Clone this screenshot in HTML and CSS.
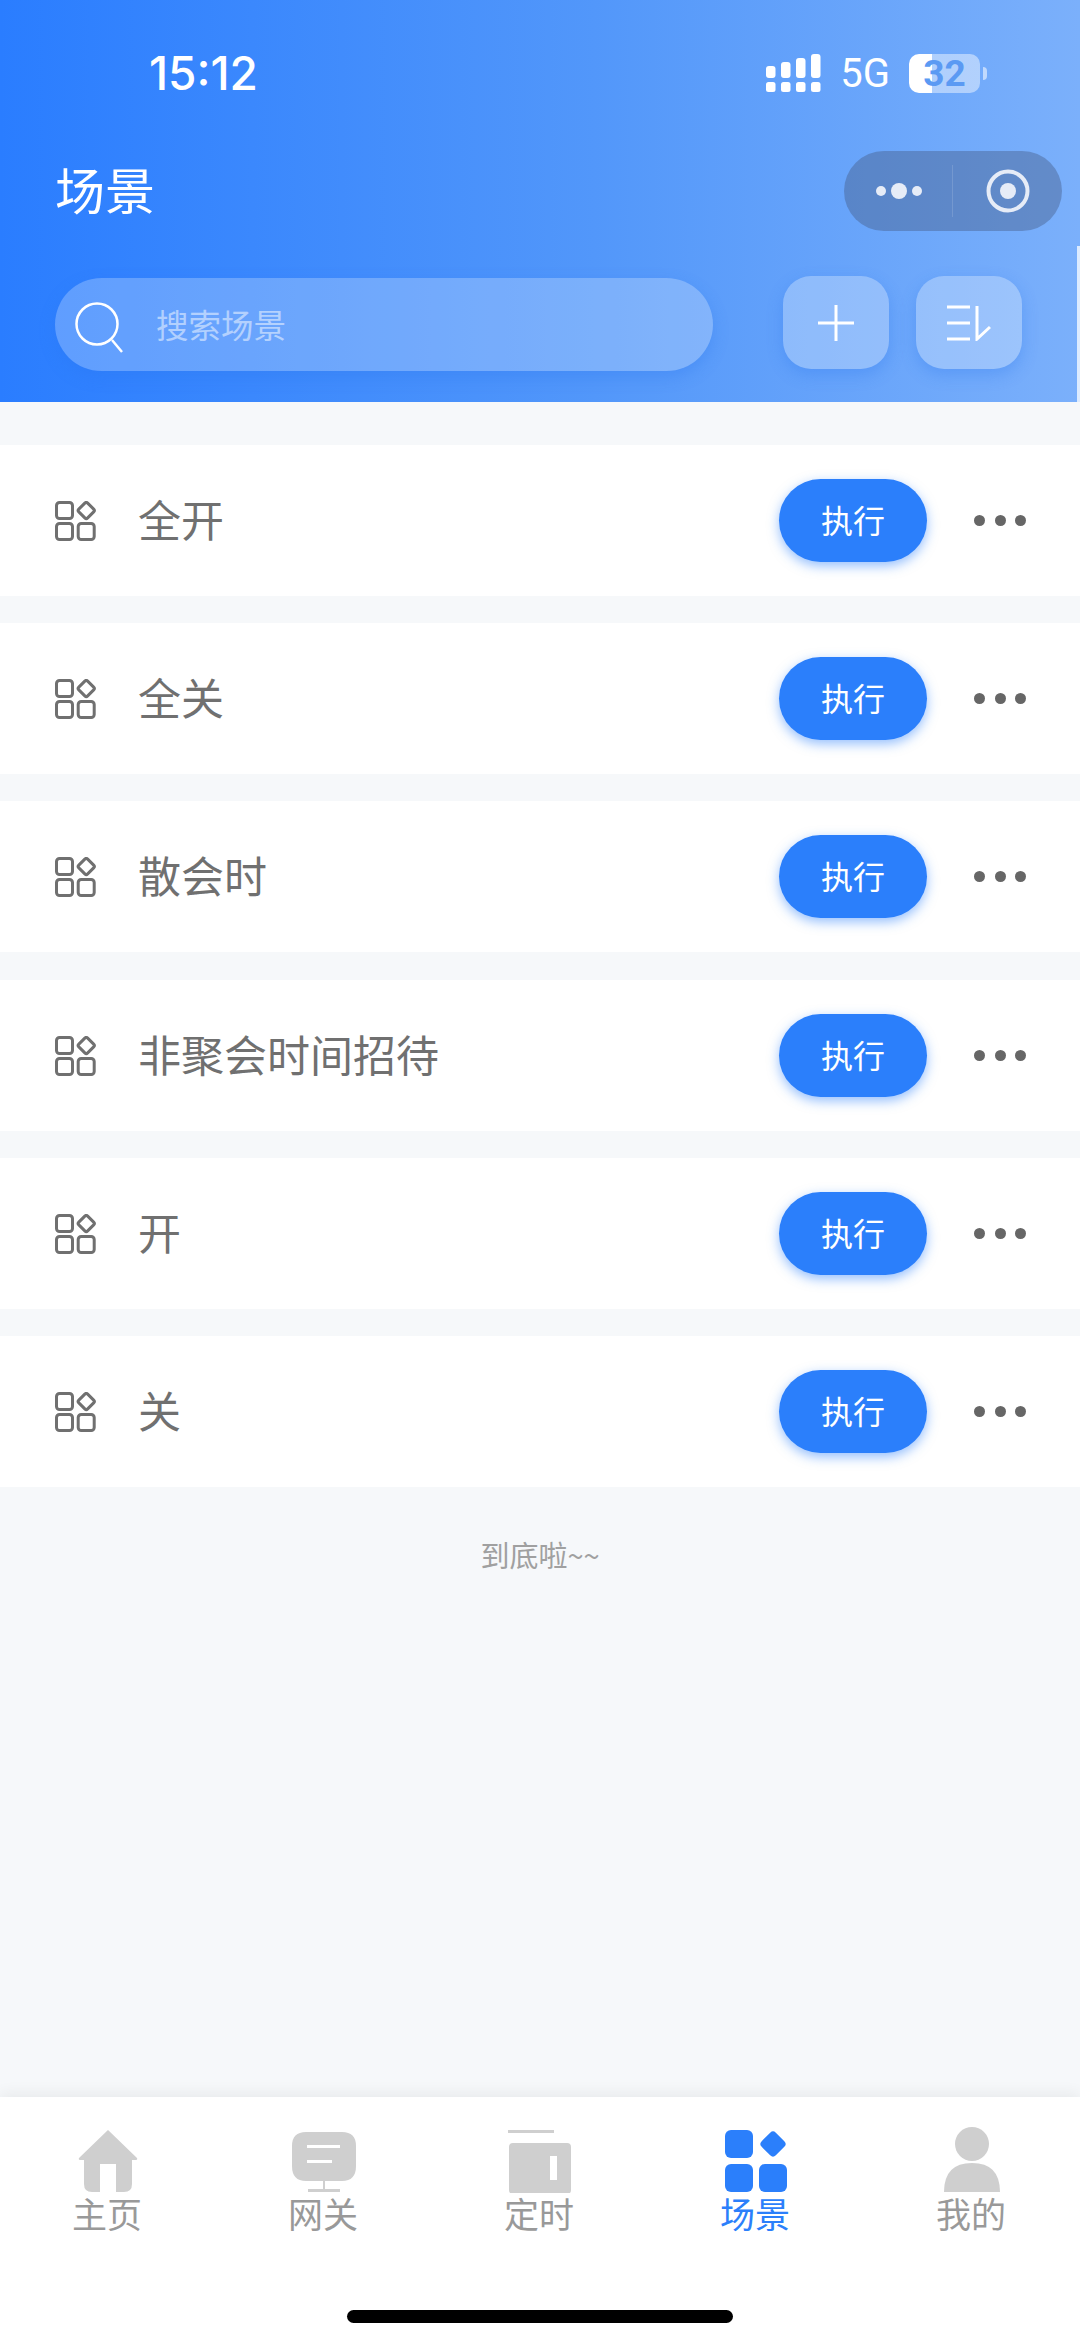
FILE: index.html
```html
<!DOCTYPE html>
<html lang="zh-CN">
<head>
    <meta charset="UTF-8">
    <title>场景</title>
    <link rel="stylesheet" href="styles.css">
</head>
<body>
    <svg class="defs" width="0" height="0">
        <symbol id="scene-icon" viewBox="0 0 42 42">
            <rect x="1.5" y="1.5" width="16" height="16" rx="3"/>
            <rect x="25" y="3.25" width="12.5" height="12.5" rx="2" transform="rotate(45 31.25 9.5)"/>
            <rect x="1.5" y="22.5" width="16" height="16" rx="3"/>
            <rect x="23.2" y="22.5" width="16" height="16" rx="3"/>
        </symbol>
    </svg>

    <div class="page">
        <header class="header">
            <div class="status">
                <span class="time">15:12</span>
                <div class="status-right">
                    <svg class="signal" width="55" height="38" viewBox="0 0 55 38">
                        <rect x="0" y="28" width="9.5" height="10" rx="2.5"/>
                        <rect x="15" y="28" width="9.5" height="10" rx="2.5"/>
                        <rect x="30" y="28" width="9.5" height="10" rx="2.5"/>
                        <rect x="45" y="28" width="9.5" height="10" rx="2.5"/>
                        <rect x="0" y="12" width="9.5" height="12" rx="3"/>
                        <rect x="15" y="8" width="9.5" height="16" rx="3"/>
                        <rect x="30" y="4" width="9.5" height="20" rx="3"/>
                        <rect x="45" y="0" width="9.5" height="24" rx="3"/>
                    </svg>
                    <span class="net">5G</span>
                    <span class="battery">32</span>
                </div>
            </div>

            <div class="nav">
                <h1>场景</h1>
                <div class="capsule">
                    <svg width="50" height="24" viewBox="0 0 50 24">
                        <circle cx="6" cy="12" r="5"/>
                        <circle cx="24" cy="12" r="8"/>
                        <circle cx="42" cy="12" r="5"/>
                    </svg>
                    <i class="capsule-line"></i>
                    <svg width="44" height="44" viewBox="0 0 44 44">
                        <circle class="ring" cx="22" cy="22" r="19.5"/>
                        <circle cx="22" cy="22" r="8"/>
                    </svg>
                </div>
            </div>

            <div class="tools">
                <div class="search">
                    <svg width="48" height="56" viewBox="0 0 48 56">
                        <circle cx="22" cy="22" r="20.5"/>
                        <path d="M37 38 L47 50"/>
                    </svg>
                    <span>搜索场景</span>
                </div>
                <div class="tool-btn">
                    <svg width="36" height="36" viewBox="0 0 36 36"><path d="M0 18 H36 M18 0 V36"/></svg>
                </div>
                <div class="tool-btn">
                    <svg width="44" height="36" viewBox="0 0 44 36"><path d="M0 2 H23 M0 18 H23 M0 34 H23 M30 1 V34 L43 22"/></svg>
                </div>
            </div>
        </header>

        <main class="list">
            <div class="row">
                <svg class="row-icon"><use href="#scene-icon"/></svg>
                <span class="row-name">全开</span>
                <span class="run">执行</span>
                <span class="more"><i></i><i></i><i></i></span>
            </div>
            <div class="row">
                <svg class="row-icon"><use href="#scene-icon"/></svg>
                <span class="row-name">全关</span>
                <span class="run">执行</span>
                <span class="more"><i></i><i></i><i></i></span>
            </div>
            <div class="row">
                <svg class="row-icon"><use href="#scene-icon"/></svg>
                <span class="row-name">散会时</span>
                <span class="run">执行</span>
                <span class="more"><i></i><i></i><i></i></span>
            </div>
            <div class="row">
                <svg class="row-icon"><use href="#scene-icon"/></svg>
                <span class="row-name">非聚会时间招待</span>
                <span class="run">执行</span>
                <span class="more"><i></i><i></i><i></i></span>
            </div>
            <div class="row">
                <svg class="row-icon"><use href="#scene-icon"/></svg>
                <span class="row-name">开</span>
                <span class="run">执行</span>
                <span class="more"><i></i><i></i><i></i></span>
            </div>
            <div class="row">
                <svg class="row-icon"><use href="#scene-icon"/></svg>
                <span class="row-name">关</span>
                <span class="run">执行</span>
                <span class="more"><i></i><i></i><i></i></span>
            </div>
            <p class="end">到底啦~~</p>
        </main>

        <footer class="tabbar">
            <nav class="tabs">
                <a class="tab">
                    <svg width="66" height="66" viewBox="0 0 66 66">
                        <path d="M33 3 L62 31 Q63 33 60 33 H57 V57 Q57 65 49 65 H41 V37 H25 V65 H17 Q9 65 9 57 V33 H6 Q3 33 4 31 Z"/>
                    </svg>
                    <span>主页</span>
                </a>
                <a class="tab">
                    <svg width="66" height="66" viewBox="0 0 66 66">
                        <path fill-rule="evenodd" d="M15 5 H51 Q65 5 65 19 V39 Q65 54 51 54 H15 Q1 54 1 39 V19 Q1 5 15 5 Z M16 18 V21 H49 V18 Z M16 33 V36 H41 V33 Z"/>
                        <path d="M32 54 H34 V62 H49 V65 H17 V62 H32 Z"/>
                    </svg>
                    <span>网关</span>
                </a>
                <a class="tab">
                    <svg width="66" height="66" viewBox="0 0 66 66">
                        <path fill-rule="evenodd" d="M6 16 H60 Q64 16 64 20 V63 Q64 67 60 67 H6 Q2 67 2 63 V20 Q2 16 6 16 Z M43 29 V53 H50 V29 Z"/>
                        <rect x="1" y="3" width="46" height="3"/>
                    </svg>
                    <span>定时</span>
                </a>
                <a class="tab active">
                    <svg width="66" height="66" viewBox="0 0 66 66">
                        <rect x="2" y="3" width="28" height="28" rx="6"/>
                        <rect x="40" y="7" width="20" height="20" rx="4" transform="rotate(45 50 17)"/>
                        <rect x="2" y="37" width="28" height="28" rx="6"/>
                        <rect x="36" y="37" width="28" height="28" rx="6"/>
                    </svg>
                    <span>场景</span>
                </a>
                <a class="tab">
                    <svg width="66" height="66" viewBox="0 0 66 66">
                        <circle cx="33" cy="17" r="17"/>
                        <path d="M5 65 Q5 36 33 36 Q61 36 61 65 Z"/>
                    </svg>
                    <span>我的</span>
                </a>
            </nav>
            <div class="home-bar"></div>
        </footer>
    </div>
</body>
</html>
```

FILE: styles.css
```css
* {
    box-sizing: border-box;
}
body {
    margin: 0;
    background: #f6f8fa;
    font-family: "Noto Sans CJK SC", "Noto Sans", sans-serif;
}
.defs {
    display: block;
    height: 0;
}
.page {
    display: flex;
    flex-direction: column;
    min-height: 100vh;
}

/* header */
.header {
    position: relative;
    height: 402px;
    background: linear-gradient(90deg, #2a7dff 0%, #5297fa 55%, #7bb0fb 100%);
    color: #fff;
}
/* pale sliver on the right edge of the header */
.header::after {
    content: "";
    position: absolute;
    right: 0;
    top: 246px;
    bottom: 0;
    width: 3px;
    background: #dcebff;
}
.status {
    display: flex;
    align-items: center;
    justify-content: space-between;
    height: 146px;
    padding: 0 100px 0 149px;
}
.time {
    font-family: Inter, Roboto, sans-serif;
    font-size: 46px;
    font-weight: 500;
}
.status-right {
    display: flex;
    align-items: center;
}
.signal {
    fill: #fff;
}
.net {
    margin-left: 19px;
    font-family: Roboto, sans-serif;
    font-size: 40px;
}
.battery {
    position: relative;
    width: 71px;
    height: 39px;
    margin-left: 19px;
    border-radius: 10px;
    background: linear-gradient(90deg, #fff 32%, rgba(255, 255, 255, 0.45) 32%);
    color: #5b9af3;
    font-family: Roboto, sans-serif;
    font-size: 37px;
    font-weight: 700;
    line-height: 39px;
    text-align: center;
}
.battery::after {
    content: "";
    position: absolute;
    left: 74px;
    top: 13px;
    width: 4px;
    height: 13px;
    border-radius: 0 4px 4px 0;
    background: rgba(255, 255, 255, 0.55);
}
.nav {
    display: flex;
    align-items: center;
    justify-content: space-between;
    height: 80px;
    margin-top: 5px;
    padding: 0 18px 0 55px;
}
.nav h1 {
    margin: -6px 0 0;
    font-size: 50px;
    font-weight: 400;
}
.capsule {
    display: flex;
    align-items: center;
    width: 218px;
    height: 80px;
    padding-left: 31px;
    border-radius: 40px;
    background: rgba(70, 90, 130, 0.42);
}
.capsule svg {
    fill: #e6ecf7;
}
.capsule-line {
    width: 1px;
    height: 52px;
    margin: 0 33px 0 27px;
    background: rgba(255, 255, 255, 0.14);
}
.capsule .ring {
    fill: none;
    stroke: #e6ecf7;
    stroke-width: 4px;
}
.tools {
    display: flex;
    align-items: flex-start;
    margin-top: 45px;
    padding-left: 55px;
}
.search {
    display: flex;
    align-items: center;
    width: 658px;
    height: 93px;
    margin: 2px 70px 0 0;
    padding-left: 20px;
    border-radius: 47px;
    background: rgba(255, 255, 255, 0.24);
    box-shadow: 0 6px 16px rgba(40, 115, 240, 0.3);
}
.search svg {
    fill: none;
    stroke: #fff;
    stroke-width: 2.5px;
    margin-top: 10px;
}
.search span {
    margin: -3px 0 0 33px;
    font-size: 32.5px;
    color: rgba(255, 255, 255, 0.5);
}
.tool-btn {
    display: flex;
    align-items: center;
    justify-content: center;
    width: 106px;
    height: 93px;
    margin-right: 27px;
    border-radius: 28px;
    background: rgba(255, 255, 255, 0.28);
    box-shadow: 0 6px 16px rgba(40, 115, 240, 0.3);
}
.tool-btn svg {
    fill: none;
    stroke: #fff;
    stroke-width: 3px;
}

/* scene list */
.list {
    display: flex;
    flex-direction: column;
    gap: 27.2px;
    padding-top: 43px;
}
.row {
    display: flex;
    align-items: center;
    height: 151px;
    padding: 0 54px 0 55px;
    background: #fff;
}
.row-icon {
    width: 42px;
    height: 42px;
    margin-top: 3px;
    fill: none;
    stroke: #707070;
    stroke-width: 3px;
}
.row-name {
    flex: 1;
    margin: -5px 0 0 41px;
    font-size: 43px;
    color: #707070;
}
.run {
    width: 148px;
    height: 83px;
    border-radius: 42px;
    background: #2b7ffb;
    box-shadow: 0 4px 12px rgba(43, 127, 251, 0.5);
    color: #fff;
    font-size: 32px;
    line-height: 80px;
    text-align: center;
}
.more {
    display: flex;
    gap: 9.5px;
    margin-left: 47px;
}
.more i {
    width: 11px;
    height: 11px;
    border-radius: 50%;
    background: #666;
}
.end {
    margin: 20px 0 0;
    font-size: 29px;
    line-height: 40px;
    color: #a0a0a0;
    text-align: center;
}

/* tab bar */
.tabbar {
    margin-top: auto;
    height: 244px;
    background: #fff;
    box-shadow: 0 -4px 14px rgba(0, 0, 0, 0.06);
}
.tabs {
    display: grid;
    grid-template-columns: repeat(5, 1fr);
    padding-top: 30px;
}
.tab {
    display: flex;
    flex-direction: column;
    align-items: center;
    fill: #cfcfcf;
    color: #999;
    font-size: 35px;
    line-height: 40px;
}
.tab span {
    margin: 0 2px 0 0;
}
.tab.active {
    fill: #2b7ffb;
    color: #2b7ffb;
}
.home-bar {
    width: 386px;
    height: 13px;
    margin: 77px auto 0;
    border-radius: 7px;
    background: #000;
}
```
